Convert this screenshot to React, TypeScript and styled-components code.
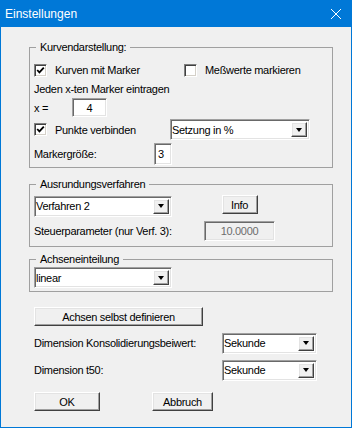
import React from "react"
import styled, { createGlobalStyle } from "styled-components"

const GlobalStyle = createGlobalStyle`
  html, body {
    margin: 0;
    padding: 0;
    background: #f0f0f0;
  }
  body {
    font-family: "Liberation Sans", Arial, sans-serif;
    font-size: 11px;
    letter-spacing: -0.3px;
    color: #000;
  }
  * {
    box-sizing: border-box;
  }
`

const Window = styled.div`
  width: 352px;
  height: 428px;
  border: 1px solid #0078d7;
  border-top: none;
  background: #f0f0f0;
  display: flex;
  flex-direction: column;
`

const TitleBar = styled.div`
  height: 27px;
  background: #0078d7;
  color: #fff;
  display: flex;
  align-items: center;
  justify-content: space-between;
  padding: 0 9px 0 4px;
  font-size: 12px;
  letter-spacing: 0;
`

const Body = styled.div`
  padding: 13px 18px 0 28px;
  display: flex;
  flex-direction: column;
`

const Group = styled.fieldset<{ $top: number; $pad: string }>`
  margin: ${(p) => p.$top}px 0 0 0;
  padding: ${(p) => p.$pad};
  border: 1px solid #a0a0a0;
  min-width: 0;
`

const Legend = styled.legend`
  margin-left: 2px;
  padding: 0 4px;
  line-height: 14px;
`

const Row = styled.div<{ $h: number; $cols?: string }>`
  height: ${(p) => p.$h}px;
  display: grid;
  grid-template-columns: ${(p) => p.$cols || "auto"};
  align-items: center;
`

const CheckRow = styled.label`
  display: flex;
  align-items: center;
  gap: 8px;
`

const Box = styled.span`
  width: 13px;
  height: 13px;
  background: #fff;
  border: 1px solid;
  border-color: #808080 #fff #fff #808080;
  box-shadow: inset 1px 1px #404040, inset -1px -1px #d4d0c8;
  display: flex;
  align-items: center;
  justify-content: center;
`

const Field = styled.div<{ $w: number; $h: number; $align?: string; $disabled?: boolean }>`
  width: ${(p) => p.$w}px;
  height: ${(p) => p.$h}px;
  background: ${(p) => (p.$disabled ? "#f0f0f0" : "#fff")};
  color: ${(p) => (p.$disabled ? "#6d6d6d" : "#000")};
  border: 1px solid;
  border-color: #a0a0a0 #fff #fff #a0a0a0;
  box-shadow: inset 1px 1px #696969, inset -1px -1px #e3e3e3;
  display: flex;
  align-items: center;
  justify-content: ${(p) => p.$align || "center"};
  padding: 0 3px;
`

const Select = styled.div<{ $w: number }>`
  width: ${(p) => p.$w}px;
  height: 21px;
  background: #fff;
  border: 1px solid;
  border-color: #a0a0a0 #fff #fff #a0a0a0;
  box-shadow: inset 1px 1px #696969, inset -1px -1px #e3e3e3;
  display: flex;
  align-items: center;
  padding: 2px 2px 2px 1px;
`

const SelectText = styled.span`
  flex: 1;
  white-space: nowrap;
`

const ArrowBtn = styled.span`
  width: 16px;
  align-self: stretch;
  background: #f0f0f0;
  border: 1px solid;
  border-color: #fff #404040 #404040 #fff;
  box-shadow: inset -1px -1px #a0a0a0, inset 1px 1px #e3e3e3;
  display: flex;
  align-items: center;
  justify-content: center;
`

const Triangle = styled.span`
  width: 0;
  height: 0;
  border-left: 3.5px solid transparent;
  border-right: 3.5px solid transparent;
  border-top: 4px solid #000;
`

const Button = styled.button<{ $w: number }>`
  width: ${(p) => p.$w}px;
  height: 19px;
  padding: 0;
  font: inherit;
  letter-spacing: -0.3px;
  color: #000;
  background: #f0f0f0;
  border: 1px solid;
  border-color: #fff #404040 #404040 #fff;
  box-shadow: inset -1px -1px #a0a0a0, inset 1px 1px #e3e3e3;
`

const ParamGrid = styled.div`
  display: grid;
  grid-template-columns: 170px 71px;
  grid-template-rows: 22px 24px;
  row-gap: 2px;
  align-items: center;
`

const InfoCell = styled.div`
  align-self: start;
  display: flex;
  justify-content: center;
`

const Lower = styled.div`
  padding-left: 5px;
  display: flex;
  flex-direction: column;
`

const Spaced = styled.div<{ $top: number }>`
  margin-top: ${(p) => p.$top}px;
`

const ButtonRow = styled.div`
  margin-top: 11px;
  display: flex;
  gap: 52px;
`

function Checkbox({ checked, label }: { checked?: boolean; label: string }) {
  return (
    <CheckRow>
      <Box>
        {checked && (
          <svg width="9" height="9" viewBox="0 0 9 9">
            <polyline points="1.2,4 3.4,6.4 7.8,1.6" fill="none" stroke="#000" strokeWidth="1.8" />
          </svg>
        )}
      </Box>
      <span>{label}</span>
    </CheckRow>
  )
}

function Dropdown({ w, value }: { w: number; value: string }) {
  return (
    <Select $w={w}>
      <SelectText>{value}</SelectText>
      <ArrowBtn>
        <Triangle />
      </ArrowBtn>
    </Select>
  )
}

export default function App() {
  return (
    <>
      <GlobalStyle />
      <Window>
        <TitleBar>
          <span>Einstellungen</span>
          <svg width="12" height="12" viewBox="0 0 12 12">
            <path d="M1 1 L11 11 M11 1 L1 11" stroke="#fff" strokeWidth="1" />
          </svg>
        </TitleBar>
        <Body>
          <Group $top={0} $pad="6px 4px 0 4px">
            <Legend>Kurvendarstellung:</Legend>
            <Row $h={20} $cols="150px auto">
              <Checkbox checked label="Kurven mit Marker" />
              <Checkbox label="Meßwerte markieren" />
            </Row>
            <Row $h={17}>
              <span>Jeden x-ten Marker eintragen</span>
            </Row>
            <Row $h={21} $cols="38px auto">
              <span>x =</span>
              <Field $w={35} $h={19}>4</Field>
            </Row>
            <Row $h={23} $cols="136px auto">
              <Checkbox checked label="Punkte verbinden" />
              <Dropdown w={140} value="Setzung in %" />
            </Row>
            <Row $h={26} $cols="120px auto">
              <span>Markergröße:</span>
              <Field $w={18} $h={22} $align="flex-start">3</Field>
            </Row>
          </Group>

          <Group $top={9} $pad="4px 4px 3px 4px">
            <Legend>Ausrundungsverfahren</Legend>
            <ParamGrid>
              <Dropdown w={138} value="Verfahren 2" />
              <InfoCell>
                <Button $w={36}>Info</Button>
              </InfoCell>
              <span>Steuerparameter (nur Verf. 3):</span>
              <Field $w={71} $h={20} $disabled>10.0000</Field>
            </ParamGrid>
          </Group>

          <Group $top={5} $pad="1px 4px 3px 4px">
            <Legend>Achseneinteilung</Legend>
            <Dropdown w={138} value="linear" />
          </Group>

          <Lower>
            <Spaced $top={15}>
              <Button $w={169}>Achsen selbst definieren</Button>
            </Spaced>
            <Spaced $top={6}>
              <Row $h={22} $cols="188px auto">
                <span>Dimension Konsolidierungsbeiwert:</span>
                <Dropdown w={95} value="Sekunde" />
              </Row>
            </Spaced>
            <Spaced $top={5}>
              <Row $h={22} $cols="188px auto">
                <span>Dimension t50:</span>
                <Dropdown w={95} value="Sekunde" />
              </Row>
            </Spaced>
            <ButtonRow>
              <Button $w={66}>OK</Button>
              <Button $w={61}>Abbruch</Button>
            </ButtonRow>
          </Lower>
        </Body>
      </Window>
    </>
  )
}
